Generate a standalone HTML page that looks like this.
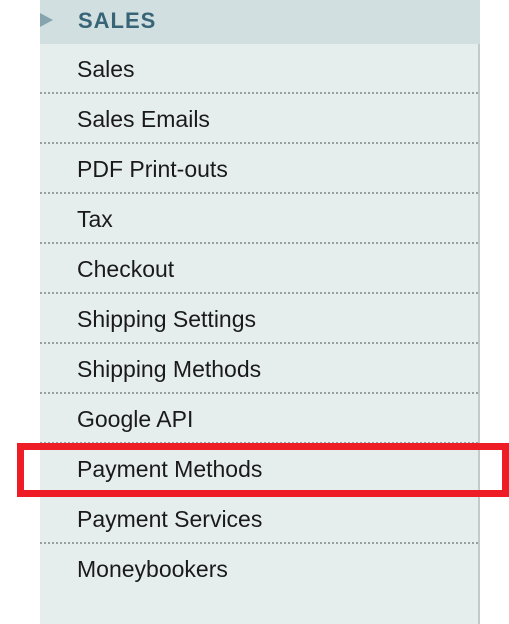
<!DOCTYPE html>
<html><head><meta charset="utf-8"><style>
body{margin:0;width:509px;height:624px;background:#fff;position:relative;overflow:hidden;font-family:"Liberation Sans",Arial,sans-serif}
.panel{position:absolute;left:40px;top:0;width:438px;height:624px;background:#e6eeed;border-right:2px solid #c2cbcc}
.hd{position:absolute;left:40px;top:0;width:440px;height:44px;background:#d2dfe0}
.hd span{position:absolute;left:38px;top:8px;font-weight:bold;font-size:22px;color:#386478;letter-spacing:1px}
.tri{position:absolute;left:40px;top:13px;width:0;height:0;border-top:7px solid transparent;border-bottom:7px solid transparent;border-left:13px solid #86a4ae}
.row{position:absolute;left:40px;width:438px;height:50px;border-bottom:2px dotted #9aa0a2;box-sizing:border-box}
.row span{position:absolute;left:37px;top:12px;font-size:23px;color:#1a1a1a}
.nob{border-bottom:none}
.red{position:absolute;left:17px;top:443px;width:492px;height:54px;border:7px solid #ee1c25;box-sizing:border-box}
</style></head><body>
<div class="panel"></div>
<div class="hd"><span>SALES</span></div>
<div class="tri"></div>
<div class="row" style="top:44px"><span>Sales</span></div>
<div class="row" style="top:94px"><span>Sales Emails</span></div>
<div class="row" style="top:144px"><span>PDF Print-outs</span></div>
<div class="row" style="top:194px"><span>Tax</span></div>
<div class="row" style="top:244px"><span>Checkout</span></div>
<div class="row" style="top:294px"><span>Shipping Settings</span></div>
<div class="row" style="top:344px"><span>Shipping Methods</span></div>
<div class="row" style="top:394px"><span>Google API</span></div>
<div class="row" style="top:444px"><span>Payment Methods</span></div>
<div class="row" style="top:494px"><span>Payment Services</span></div>
<div class="row nob" style="top:544px"><span>Moneybookers</span></div>
<div class="red"></div>
</body></html>
